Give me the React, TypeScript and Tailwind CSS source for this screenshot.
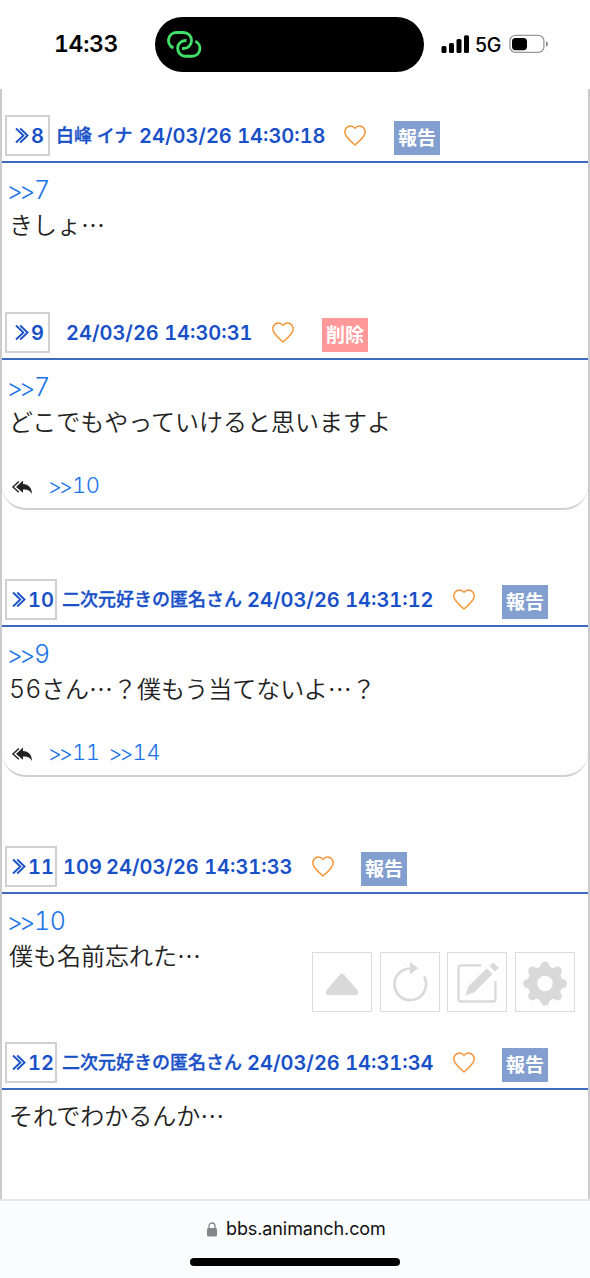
import { clsx } from 'clsx';

interface Post {
    id: number;
    name: string;
    nameClass: string;
    date: string;
    own?: boolean;
    anchor?: string;
    digits?: string;
    body: string;
    replies?: string[];
    heightClass: string;
}

const POSTS: Post[] = [
    {
        id: 8,
        name: '白峰 イナ',
        nameClass: 'w-[83px] ml-[6px]',
        date: '24/03/26 14:30:18',
        anchor: '7',
        body: 'きしょ…',
        heightClass: 'h-[197px]',
    },
    {
        id: 9,
        name: '',
        nameClass: 'w-[10px] ml-[6px]',
        date: '24/03/26 14:30:31',
        own: true,
        anchor: '7',
        body: 'どこでもやっていけると思いますよ',
        replies: ['10'],
        heightClass: 'h-[267px]',
    },
    {
        id: 10,
        name: '二次元好きの匿名さん',
        nameClass: 'w-[185px] ml-[5px]',
        date: '24/03/26 14:31:12',
        anchor: '9',
        digits: '56',
        body: 'さん…？僕もう当てないよ…？',
        replies: ['11', '14'],
        heightClass: 'h-[267px]',
    },
    {
        id: 11,
        name: '109',
        nameClass: 'w-[43px] ml-[6px] text-[20px]',
        date: '24/03/26 14:31:33',
        anchor: '10',
        body: '僕も名前忘れた…',
        heightClass: 'h-[196px]',
    },
    {
        id: 12,
        name: '二次元好きの匿名さん',
        nameClass: 'w-[185px] ml-[5px]',
        date: '24/03/26 14:31:34',
        body: 'それでわかるんか…',
        heightClass: 'h-[150px]',
    },
];

const StatusBar = () => (
    <div className="relative flex h-[89px] shrink-0 font-['Inter',sans-serif] text-black">
        <div className="mt-[30px] ml-[54px] w-[101px] text-[23px] leading-[29px] font-semibold tracking-[-0.3px] tabular-nums">
            14:33
        </div>
        <div className="mt-[17px] h-[55px] w-[269px] rounded-full bg-black">
            <svg
                className="mt-[13px] ml-[12px]"
                width="35"
                height="29"
                viewBox="0 0 35 29"
                fill="none"
                stroke="#41e069"
                strokeWidth="2.9"
            >
                <path d="M6.5 17.9 A8 8 0 0 1 9.5 2.5 H16.5 A8 8 0 0 1 16.5 18.5 H15" />
                <path d="M19.5 10.5 H18.5 A7.85 7.85 0 0 0 18.5 26.2 H25.2 A7.85 7.85 0 0 0 28.3 11.2" />
            </svg>
        </div>
        <svg className="mt-[35px] ml-[17px]" width="28" height="18" viewBox="0 0 28 18">
            <rect x="0.5" y="11" width="5" height="7" rx="1.5" />
            <rect x="8" y="8" width="5" height="10" rx="1.5" />
            <rect x="15.5" y="4" width="5" height="14" rx="1.5" />
            <rect x="23" y="0.3" width="5" height="17.7" rx="1.5" />
        </svg>
        <div className="mt-[33px] ml-[6px] w-[34px] text-[19.5px] leading-[24px] font-medium tracking-[-0.2px]">
            5G
        </div>
        <svg className="mt-[34px]" width="40" height="20" viewBox="0 0 40 20">
            <rect x="0.9" y="1.4" width="34" height="17" rx="5.5" fill="none" stroke="#999" strokeWidth="1.3" />
            <rect x="3" y="4" width="15" height="12.2" rx="3.6" />
            <path d="M37 7.3 Q39 8 39 10 Q39 12 37 12.7 Z" fill="#888" />
        </svg>
    </div>
);

const Heart = () => (
    <svg
        className="mt-[10px] ml-[17px]"
        width="22"
        height="22"
        viewBox="0 0 22 22"
        fill="none"
        stroke="#f59331"
        strokeWidth="1.4"
        strokeLinejoin="round"
    >
        <path d="M11 3.3 C8.8 0.2 4.5 0.4 2.3 3 C0.1 5.8 0.7 9 2.6 11.5 C4.6 14.2 8 17.5 11 20 C14 17.5 17.4 14.2 19.4 11.5 C21.3 9 21.9 5.8 19.7 3 C17.5 0.4 13.2 0.2 11 3.3 Z" />
    </svg>
);

const PostHeader = ({ post }: { post: Post }) => (
    <div className="flex h-[48px] border-b-2 border-[#4069bd] pl-[3px] text-[#1850c8]">
        <div
            className={clsx(
                'box-border flex h-[41px] items-center justify-end border-2 border-[#d0d0d0]',
                post.id < 10 ? 'w-[45px] pr-[4px]' : 'w-[52px] pr-[1px]',
            )}
        >
            <svg
                className="mr-[2px]"
                width="14"
                height="17"
                viewBox="0 0 14 16"
                fill="none"
                stroke="currentColor"
                strokeWidth="1.8"
            >
                <path d="M1 1 L8.4 8 L1 15" />
                <path d="M5.2 1 L12.6 8 L5.2 15" />
            </svg>
            <span className="font-['Inter',sans-serif] text-[20px] leading-none font-semibold tabular-nums">
                {post.id}
            </span>
        </div>
        <div
            className={clsx(
                "h-[41px] font-['Inter','Noto_Sans_CJK_JP',sans-serif] leading-[42px] whitespace-nowrap tabular-nums",
                post.name === '109'
                    ? 'font-semibold'
                    : 'text-[18px] font-medium [-webkit-text-stroke:0.35px_#1850c8]',
                post.nameClass,
            )}
        >
            {post.name}
        </div>
        <div
            className={clsx(
                "h-[41px] font-['Inter',sans-serif] text-[20px] leading-[42px] font-semibold whitespace-nowrap tabular-nums",
                post.id === 8 ? 'w-[188px]' : 'w-[189px]',
            )}
        >
            {post.date}
        </div>
        <Heart />
        <div
            className={clsx(
                "mt-[6px] h-[34px] w-[46px] text-center font-['Noto_Sans_CJK_JP',sans-serif] text-[19px] leading-[31px] font-bold text-white",
                post.id < 10 ? 'ml-[28px]' : 'ml-[27px]',
                post.own ? 'bg-[#ff9999]' : 'bg-[#839fd0]',
            )}
        >
            {post.own ? '削除' : '報告'}
        </div>
    </div>
);

const Replies = ({ items }: { items: string[] }) => (
    <div className="mt-[20px] flex h-[49px] items-center rounded-[24px] border-b-2 border-[#cfcfcf] pl-[9px]">
        <svg className="mt-[6px]" width="23" height="15" viewBox="0 0 23 16">
            <path d="M7.6 1.6 L1.3 7.4 L7.6 13" fill="none" stroke="#222" strokeWidth="1.5" />
            <path
                d="M12 0.6 L4.6 7.4 L12 13.6 V10.2 C16.5 9.8 19.5 11 21.6 15 C21.6 8.5 18 4.4 12 4.2 Z"
                fill="#222"
            />
        </svg>
        <div className="mt-[1px] ml-[14px] flex gap-[9px] font-['Inter',sans-serif] text-[22px] leading-none font-light text-[#1a73e8] tabular-nums">
            {items.map((item) => (
                <a key={item} className="tracking-[-0.5px]">
                    <span className="inline-block w-[24px] translate-y-px tracking-[-3.2px]">&gt;&gt;</span>
                    {item}
                </a>
            ))}
        </div>
    </div>
);

const PostItem = ({ post }: { post: Post }) => (
    <article className={clsx('shrink-0', post.heightClass)}>
        <PostHeader post={post} />
        <div className="h-[81px] pt-[9px] pl-[7px] text-[24px] leading-[36px] whitespace-nowrap text-[#222]">
            {post.anchor && (
                <a className="-ml-[2px] block h-[36px] font-['Inter',sans-serif] text-[25px] font-light tracking-[-0.5px] text-[#1a73e8] tabular-nums">
                    <span className="inline-block w-[27px] translate-y-px tracking-[-3.6px]">&gt;&gt;</span>
                    {post.anchor}
                </a>
            )}
            <p className="-mt-[2px] h-[36px] font-['Noto_Sans_CJK_JP',sans-serif] font-[350]">
                {post.digits && (
                    <span className="inline-block w-[32px] font-['Inter',sans-serif] text-[25px] leading-none font-light tabular-nums">
                        {post.digits}
                    </span>
                )}
                {post.body}
            </p>
        </div>
        {post.replies && <Replies items={post.replies} />}
    </article>
);

const TOOL_BOX = 'size-[60px] border border-[#dcdcdc] bg-white/40';

const FloatingTools = () => (
    <div className="absolute top-[952px] left-[312px] flex gap-[7.6px]">
        <div className={TOOL_BOX}>
            <svg viewBox="0 0 58 58" fill="#d9d9d9">
                <path d="M27 21.5 Q29 19.5 31 21.5 L44.6 37.5 Q46.5 41.5 43 42 H15 Q11.5 41.5 13.4 37.5 Z" />
            </svg>
        </div>
        <div className={TOOL_BOX}>
            <svg viewBox="0 0 58 58">
                <path d="M43 23.5 A15.8 15.8 0 1 1 29 15.5" fill="none" stroke="#d9d9d9" strokeWidth="2.6" />
                <path d="M29 9 L37.3 15.2 L29 21.5 Z" fill="#d9d9d9" />
            </svg>
        </div>
        <div className={TOOL_BOX}>
            <svg viewBox="0 0 58 58">
                <path
                    d="M33 12.3 H13 Q10.5 12.3 10.5 14.8 V46 Q10.5 48.5 13 48.5 H45 Q47.5 48.5 47.5 46 V28"
                    fill="none"
                    stroke="#d9d9d9"
                    strokeWidth="2.3"
                />
                <path d="M17.5 42.5 L20.2 33.8 L38.7 15.3 L44.5 21.1 L26 39.6 Z" fill="#d9d9d9" />
                <path d="M41.5 13 L45.3 9.5 L50.8 14.8 L47 18.5 Z" fill="#d9d9d9" />
            </svg>
        </div>
        <div className={TOOL_BOX}>
            <svg viewBox="0 0 58 58">
                <circle cx="29" cy="30.5" r="12.5" fill="none" stroke="#d9d9d9" strokeWidth="9.5" />
                <g fill="#d9d9d9">
                    {[0, 45, 90, 135, 180, 225, 270, 315].map((deg) => (
                        <path
                            key={deg}
                            transform={`rotate(${deg} 29 30.5)`}
                            d="M22 16 Q24.6 14 25 11 Q26 8.5 29 8.5 Q32 8.5 33 11 Q33.4 14 36 16 Z"
                        />
                    ))}
                </g>
            </svg>
        </div>
    </div>
);

const BrowserBar = () => (
    <div className="h-[79px] shrink-0 border-t-2 border-[#e7e7e9] bg-[#fbfcfe]">
        <div className="mt-[16px] flex h-[24px] items-center pl-[206px]">
            <svg width="12" height="15" viewBox="0 0 12 15">
                <rect x="1" y="6" width="10" height="8.5" rx="1.5" fill="#85868a" />
                <path d="M3 7 V4 A3 3 0 0 1 9 4 V7" fill="none" stroke="#85868a" strokeWidth="1.3" />
            </svg>
            <span className="ml-[8px] font-['Inter',sans-serif] text-[18px] leading-[24px] tracking-[-0.1px] text-[#111]">
                bbs.animanch.com
            </span>
        </div>
        <div className="mx-auto mt-[17px] h-[8px] w-[210px] rounded-full bg-black" />
    </div>
);

const App = () => {
    return (
        <div className="relative flex h-[1278px] w-[590px] flex-col overflow-hidden bg-[#fefefe]">
            <StatusBar />
            <main className="flex h-[1110px] shrink-0 flex-col overflow-hidden border-x-2 border-[#cbcbcf] pt-[26px]">
                {POSTS.map((post) => (
                    <PostItem key={post.id} post={post} />
                ))}
            </main>
            <FloatingTools />
            <BrowserBar />
        </div>
    );
};

export default App;
